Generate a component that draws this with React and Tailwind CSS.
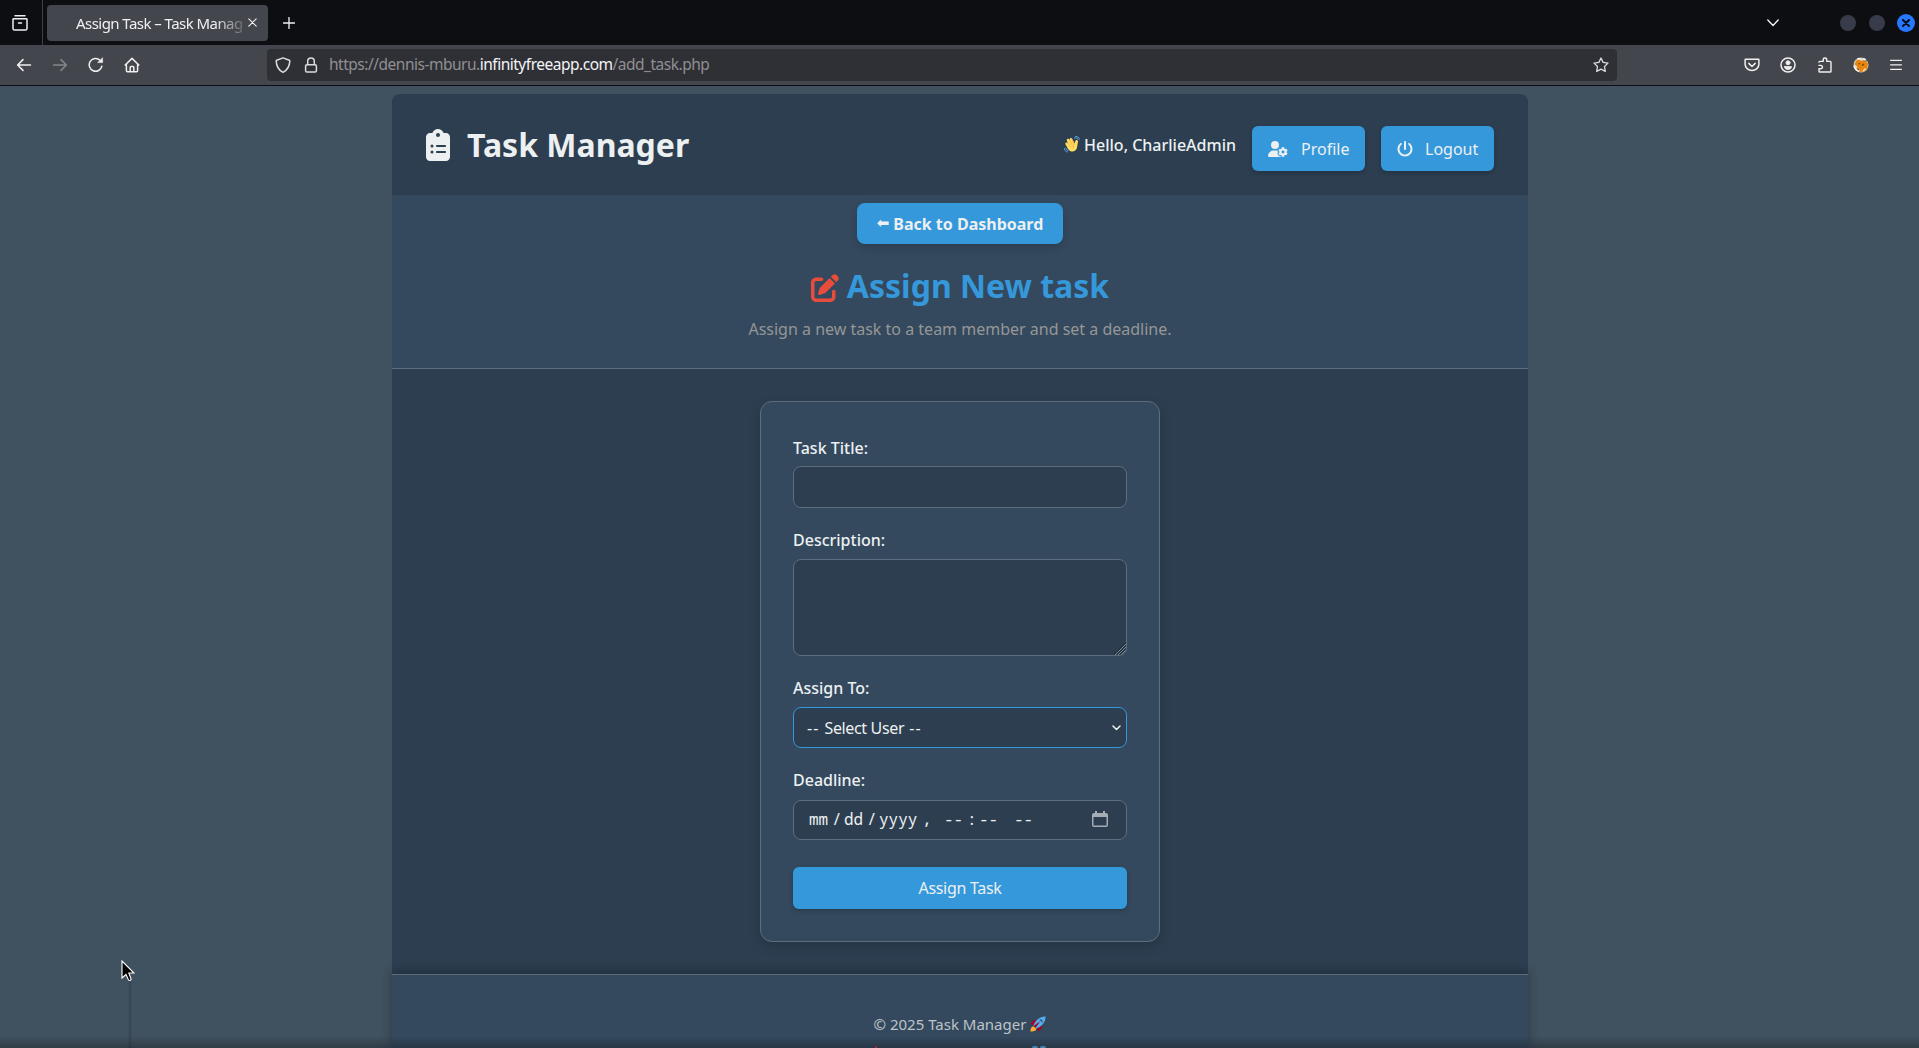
import React from "react";
import {
  FaClipboardList,
  FaUserGear,
  FaPowerOff,
  FaPenToSquare,
} from "react-icons/fa6";

const stroke = {
  fill: "none",
  stroke: "currentColor",
  strokeWidth: 1.5,
  strokeLinecap: "round",
  strokeLinejoin: "round",
};

function Icon({ className = "", size = 16, children }) {
  return (
    <svg
      width={size}
      height={size}
      viewBox="0 0 16 16"
      className={`block shrink-0 ${className}`}
      {...stroke}
    >
      {children}
    </svg>
  );
}

function TabStrip() {
  return (
    <div className="flex h-[45px] items-center bg-[#0d0e12] text-[#f0f0f4]">
      <div className="flex h-full w-[43px] shrink-0 items-center border-r border-[#3f4046] pl-3">
        <Icon>
          <path d="M3 .8h10" />
          <path d="M1.600 3.800h12.800a.9.900 0 0 1 .6.900v8.700a1.600 1.600 0 0 1-1.600 1.600H2.600A1.600 1.600 0 0 1 1 13.400V4.700a.9.900 0 0 1 .6-.9zM6.500 8h3" />
        </Icon>
      </div>
      <div className="ml-1 flex h-9 w-[221px] shrink-0 items-center rounded bg-[#44464d]">
        <span className="ml-[29px] w-[168px] text-[15px] leading-5 tracking-[-0.55px] whitespace-nowrap [mask-image:linear-gradient(to_right,black_138px,transparent_174px)]">
          Assign Task – Task Manag
        </span>
        <svg width="9" height="9" viewBox="0 0 9 9" className="ml-[4px] shrink-0" {...stroke} strokeWidth="1.1">
          <path d="M.8.8l7.4 7.4M8.2.8L.8 8.2" />
        </svg>
      </div>
      <svg width="12" height="12" viewBox="0 0 12 12" className="ml-[15px] shrink-0" {...stroke} strokeWidth="1.3">
        <path d="M6 .5v11M.5 6h11" />
      </svg>
      <div className="grow" />
      <svg width="12" height="8" viewBox="0 0 12 8" className="mr-[61px] shrink-0" {...stroke} strokeWidth="1.4">
        <path d="M.8 1L6 6.4 11.2 1" />
      </svg>
      <div className="mr-1 flex items-center">
        <span className="mr-[13px] size-4 rounded-full bg-[#383c4a]" />
        <span className="mr-3 size-4 rounded-full bg-[#383c4a]" />
        <span className="flex size-[18px] items-center justify-center rounded-full bg-[#2777ff] text-[#0b0d14]">
          <svg width="8" height="8" viewBox="0 0 8 8" {...stroke} strokeWidth="2">
            <path d="M1 1l6 6M7 1L1 7" />
          </svg>
        </span>
      </div>
    </div>
  );
}

function Toolbar() {
  return (
    <div className="flex h-[41px] items-center border-b border-[#0d0e12] bg-[#44464d] text-[#f0f0f0]">
      <Icon className="ml-4">
        <path d="M14.500 8H1.600M7 2.600L1.600 8 7 13.400" />
      </Icon>
      <Icon className="ml-5 text-[#85868a]">
        <path d="M1.500 8h12.900M9 2.600L14.400 8 9 13.400" />
      </Icon>
      <Icon className="ml-5">
        <path d="M13.900 9.200A6.400 6.400 0 1 1 12 3.200l1 1" />
        <path d="M14.600 1v4.600H10z" fill="currentColor" strokeWidth=".6" />
      </Icon>
      <Icon className="ml-5">
        <path d="M1.200 8L8 1.400 14.800 8M2.400 7v6.800a1 1 0 0 0 1 1h9.200a1 1 0 0 0 1-1V7M6.200 14.600v-4.200a.9.900 0 0 1 .9-.9h1.800a.9.900 0 0 1 .9.900v4.200" />
      </Icon>
      <div className="ml-[127px] flex h-8 w-[1350px] items-center rounded bg-[#2f3035] text-[#dcdce0]">
        <Icon className="ml-2">
          <path d="M8 .9L14.300 3.300a.8.800 0 0 1 .5.800C14.600 9 12 13.300 8 15.300 4 13.300 1.400 9 1.200 4.100a.8.800 0 0 1 .5-.8z" />
        </Icon>
        <Icon className="ml-3">
          <rect x="2.600" y="7.800" width="10.800" height="7.300" rx="1.300" />
          <path d="M4.700 7.600V4.200a3.300 3.300 0 0 1 6.600 0v3.400" />
        </Icon>
        <span className="ml-[10px] text-[15.5px] tracking-[-0.49px] whitespace-nowrap text-[#8f8f93]">
          https://dennis-mburu.<span className="text-[#f4f4f6]">infinityfreeapp.com</span>/add_task.php
        </span>
        <div className="grow" />
        <Icon className="mr-2">
          <path d="M8 1l2.100 4.400 4.900.7-3.500 3.400.8 4.900L8 12.100l-4.300 2.300.8-4.900L1 6.100l4.900-.7z" strokeWidth="1.300" />
        </Icon>
      </div>
      <div className="grow" />
      <Icon className="mr-5">
        <path d="M1.700 2.200h12.600a.6.600 0 0 1 .6.600v4.400a6.900 6.300 0 0 1-13.800 0V2.800a.6.600 0 0 1 .6-.6zM4.800 6.400L8 9.500l3.200-3.100" />
      </Icon>
      <Icon className="mr-[21px]">
        <circle cx="8" cy="8" r="7" />
        <circle cx="8" cy="5.800" r="2" fill="currentColor" strokeWidth="1" />
        <path d="M4.500 9.600h7c0 2-1.500 3-3.500 3s-3.500-1-3.500-3z" fill="currentColor" strokeWidth=".8" />
      </Icon>
      <Icon className="mr-5">
        <path d="M2 5.200a.8.800 0 0 1 .8-.8h3.400V2.800a1.800 1.800 0 0 1 3.600 0v1.600h3.400a.8.800 0 0 1 .8.800v9a.8.800 0 0 1-.8.800H2.800a.8.800 0 0 1-.8-.8v-2.400h1.800a1.700 1.700 0 0 0 0-3.400H2" strokeWidth="1.400" />
      </Icon>
      <svg width="16" height="16" viewBox="0 0 16 16" className="mr-[21px] shrink-0">
        <circle cx="8" cy="8" r="7.500" fill="#d9d4cc" />
        <path d="M1.500 7l2-3.500L6 2l2 2 3.500-1L13 5l2 1-.5 5-3 3.500L6 15l1-2.500-3.500-.5 1-2z" fill="#e8850c" />
        <path d="M4.500 1.500l3 .8M10.500 2l2 .5M.8 9l2 3.500 3 2" stroke="#fff" strokeWidth="1.300" fill="none" />
        <path d="M5.500 7l1.500-.5M9 8.500L11 7M12.500 3.500l1 1M4.500 12l1.500 1" stroke="#6b4319" strokeWidth="1.100" />
        <path d="M10 14l2.500-2.500" stroke="#ffe9c9" strokeWidth="1.100" />
      </svg>
      <svg width="12" height="12" viewBox="0 0 12 12" className="mr-[17px] shrink-0" {...stroke} strokeWidth="1.300">
        <path d="M.6 1.300h10.800M.6 5.800h10.800M.6 10.300h10.800" />
      </svg>
    </div>
  );
}

function WavingHand() {
  return (
    <svg width="16" height="17" viewBox="0 0 32 34" className="mr-1 shrink-0" role="img" aria-label="Waving hand">
      <path
        d="M3.500 13.500c1.500-1.200 3.200-.6 4.300.8L5.700 9.200C5 7.500 6 6 7.400 5.600c1.500-.4 2.700.4 3.400 1.700l.6 1C11 6 11.600 4.600 13.200 4.200c1.500-.4 2.800.5 3.500 1.800l4.800 9 .8-4c.4-2 2-3.300 4-2.700 1.600.5 2 2 1.700 3.600l-1.200 6c-.6 4-.5 8-4.300 10.900-4.500 3.400-10.500 2.400-13.700-2L3.100 17.200c-.9-1.300-.8-2.800.4-3.700z"
        fill="#ffdc5d"
      />
      <path d="M8 14.300l5 6.700M11.400 9l5.200 9M16.500 8l4 8c-2 2-2.500 4.500-1.500 7" stroke="#ef9645" strokeWidth="1.100" fill="none" strokeLinecap="round" />
      <path
        d="M21 4c3-1.500 6 .5 7.500 3M23 1c4-.6 7 2 8.500 5.500M1 25c0 4 2.500 6.500 6 7M4 24.500c.3 2.500 1.700 4 4 4.500"
        stroke="#5dadec"
        strokeWidth="1.900"
        fill="none"
        strokeLinecap="round"
      />
    </svg>
  );
}

function Rocket() {
  return (
    <svg width="16" height="16" viewBox="0 0 36 36" className="ml-1 shrink-0" role="img" aria-label="Rocket">
      <path d="M1 17l7-7 8-1-7 12zM19 35l7-7 1-8-12 7z" fill="#a0041e" />
      <path d="M1 35c0-5 2-12 7-12s6 2 6 6-8 6-13 6z" fill="#ffac33" />
      <path d="M35 1C25 1 17 6 13 12c-3 4-5 8-5 11l5 5c3 0 7-2 11-5 6-4 11-12 11-22z" fill="#55acee" />
      <path d="M8 23c5-4 10-8 15-11-3 5-7 10-11 15z" fill="#a0041e" />
      <path d="M21 9c3-2 5 0 6 1s2 4 0 6c0-4-2-6-6-7z" fill="#22313f" />
    </svg>
  );
}

function HeaderButton({ icon, children }) {
  return (
    <button className="flex h-[45px] w-[113px] items-center rounded-md bg-[#3498db] pl-4 text-base shadow-[0_2px_5px_rgba(0,0,0,0.2)]">
      {icon}
      {children}
    </button>
  );
}

function Header() {
  return (
    <header className="flex h-[101px] shrink-0 items-center bg-[#2c3e50] pr-[34px] pl-[34px]">
      <FaClipboardList className="h-8 w-6 shrink-0" />
      <h1 className="ml-[17px] text-[32px] leading-10 font-bold">Task Manager</h1>
      <div className="grow" />
      <span className="mr-4 flex items-center text-base font-medium">
        <WavingHand />
        Hello, CharlieAdmin
      </span>
      <div className="mt-2 flex gap-4">
        <HeaderButton icon={<FaUserGear className="mr-[13px] h-4 w-5" />}>Profile</HeaderButton>
        <HeaderButton icon={<FaPowerOff className="mr-3 size-4" />}>Logout</HeaderButton>
      </div>
    </header>
  );
}

function Hero() {
  return (
    <section className="flex h-[174px] shrink-0 flex-col items-center border-b border-[#5d6d7e] bg-[#34495e] pt-2">
      <button className="flex h-[41px] w-[206px] items-center justify-center rounded-lg bg-[#3498db] text-base font-bold whitespace-nowrap shadow-[0_4px_8px_rgba(0,0,0,0.15)]">
        <span className="mr-[4px] font-['DejaVu_Sans'] text-[15px] font-normal">{"\u2B05\uFE0E"}</span>
        Back to Dashboard
      </button>
      <h2 className="mt-[20px] flex h-11 items-center text-[32px] leading-[44px] font-bold text-[#3498db]">
        <FaPenToSquare className="mt-1 mr-2 size-7 text-[#e74c3c]" />
        Assign New task
      </h2>
      <p className="mt-[9px] text-base text-[#969696]">
        Assign a new task to a team member and set a deadline.
      </p>
    </section>
  );
}

function Field({ label, children }) {
  return (
    <div className="flex flex-col">
      <label className="mb-[6px] h-6 text-base leading-6 font-medium">{label}</label>
      {children}
    </div>
  );
}

function TaskForm() {
  return (
    <form className="flex h-[541px] w-[400px] flex-col rounded-xl border border-[#5d6d7e] bg-[#34495e] px-8 pt-[34px] shadow-[0_4px_12px_rgba(0,0,0,0.15)]">
      <Field label="Task Title:">
        <div className="h-[42px] rounded-lg border border-[#5d6d7e] bg-[#2c3e50]" />
      </Field>
      <div className="h-5" />
      <Field label="Description:">
        <div className="mt-px flex h-[97px] items-end justify-end overflow-hidden rounded-lg border border-[#5d6d7e] bg-[#2c3e50]">
          <svg width="12" height="12" viewBox="0 0 12 12" fill="none">
            <path d="M1 12L12 1M4 12l8-8M7 12l5-5M10 12l2-2" stroke="#98a1a9" strokeWidth=".8" />
            <path d="M0 11.500L11.500 0M2.500 12L12 2.500M5.500 12L12 5.500M8.500 12L12 8.500" stroke="#1b232b" strokeWidth=".8" />
          </svg>
        </div>
      </Field>
      <div className="h-5" />
      <Field label="Assign To:">
        <div className="mt-px flex h-[41px] items-center rounded-lg border border-[#3498db] bg-[#2c3e50] pr-[5px] pl-[13px]">
          <span className="grow text-base tracking-[-0.35px] whitespace-pre">
            <span className="tracking-[1px]">-- </span>Select User<span className="tracking-[1px]"> --</span>
          </span>
          <svg width="9" height="6" viewBox="0 0 9 6" {...stroke} strokeWidth="1.500">
            <path d="M1 1l3.500 3.500L8 1" />
          </svg>
        </div>
      </Field>
      <div className="h-5" />
      <Field label="Deadline:">
        <div className="mt-[2px] flex h-10 items-center rounded-lg border border-[#5d6d7e] bg-[#2c3e50] pr-[18px] pl-[15px]">
          <span className="mb-[2px] flex grow font-['Noto_Sans_Mono','DejaVu_Sans_Mono',monospace] text-base whitespace-pre">
            <span className="w-[23px]">mm</span>
            <span className="w-3">/</span>
            <span className="w-[23px]">dd</span>
            <span className="w-3">/</span>
            <span className="w-[43px]">yyyy</span>
            <span className="w-[22px]">,</span>
            <span className="w-[23px]">--</span>
            <span className="w-3">:</span>
            <span className="w-[35px]">--</span>
            <span>--</span>
          </span>
          <svg width="16" height="16" viewBox="0 0 16 16" className="mb-[2px] text-[#a4adb5]">
            <path d="M3 0h2v2h6V0h2v2h1a2 2 0 0 1 2 2v10a2 2 0 0 1-2 2H2a2 2 0 0 1-2-2V4a2 2 0 0 1 2-2h1zM1.500 6v8c0 .4.200.600.600.600h11.800c.4 0 .6-.2.600-.600V6z" fill="currentColor" fillRule="evenodd" />
          </svg>
        </div>
      </Field>
      <button
        type="button"
        className="mt-[27px] h-[42px] rounded-md bg-[#3498db] text-base tracking-[-0.3px] shadow-[0_2px_5px_rgba(0,0,0,0.2)]"
      >
        Assign Task
      </button>
    </form>
  );
}

function Footer() {
  return (
    <footer className="relative z-10 flex h-[74px] shrink-0 flex-col items-center border-t border-[#5d6d7e] bg-[#34495e] pt-[37px] text-[15px] leading-6 whitespace-nowrap text-[#bdc3c7] shadow-[0_-2px_10px_rgba(0,0,0,0.3)]">
      <p className="flex items-center">
        © 2025 Task Manager <Rocket />
      </p>
      <div className="mt-[10px] flex h-[2px] w-[180px] justify-between">
        <span className="ml-[5px] h-[2px] w-[2px] rounded-t-full bg-[#dd2e44]" />
        <span className="mr-[4px] flex gap-[2px]">
          <span className="h-[2px] w-[6px] rounded-t-full bg-[#5dadec]" />
          <span className="h-[2px] w-[6px] rounded-t-full bg-[#5dadec]" />
        </span>
      </div>
    </footer>
  );
}

export default function App() {
  return (
    <div className="relative flex h-[1048px] w-full flex-col overflow-hidden bg-[#40515f] font-['Noto_Sans',sans-serif]">
      <TabStrip />
      <Toolbar />
      <div className="mt-2 ml-[392px] flex w-[1136px] grow flex-col text-[#ecf0f1] [&>header]:rounded-t-lg">
        <Header />
        <Hero />
        <main className="flex h-[605px] shrink-0 justify-center bg-[#2c3e50] pt-8">
          <TaskForm />
        </main>
        <Footer />
      </div>
      <div className="absolute bottom-0 left-32 z-10 h-[68px] w-1 bg-gradient-to-r from-transparent via-black/15 to-transparent" />
      <div className="absolute inset-x-0 bottom-0 z-20 h-3 bg-gradient-to-b from-transparent to-black/25" />
      <svg width="14" height="22" viewBox="0 0 14 22" className="absolute top-[960px] left-[121px] z-20">
        <path d="M1 1v17l4-3.500 2.500 5.500c.8 1 3 .300 2.500-1.200L7.800 13H13z" fill="#000" stroke="#fff" strokeWidth="1.100" />
      </svg>
    </div>
  );
}
